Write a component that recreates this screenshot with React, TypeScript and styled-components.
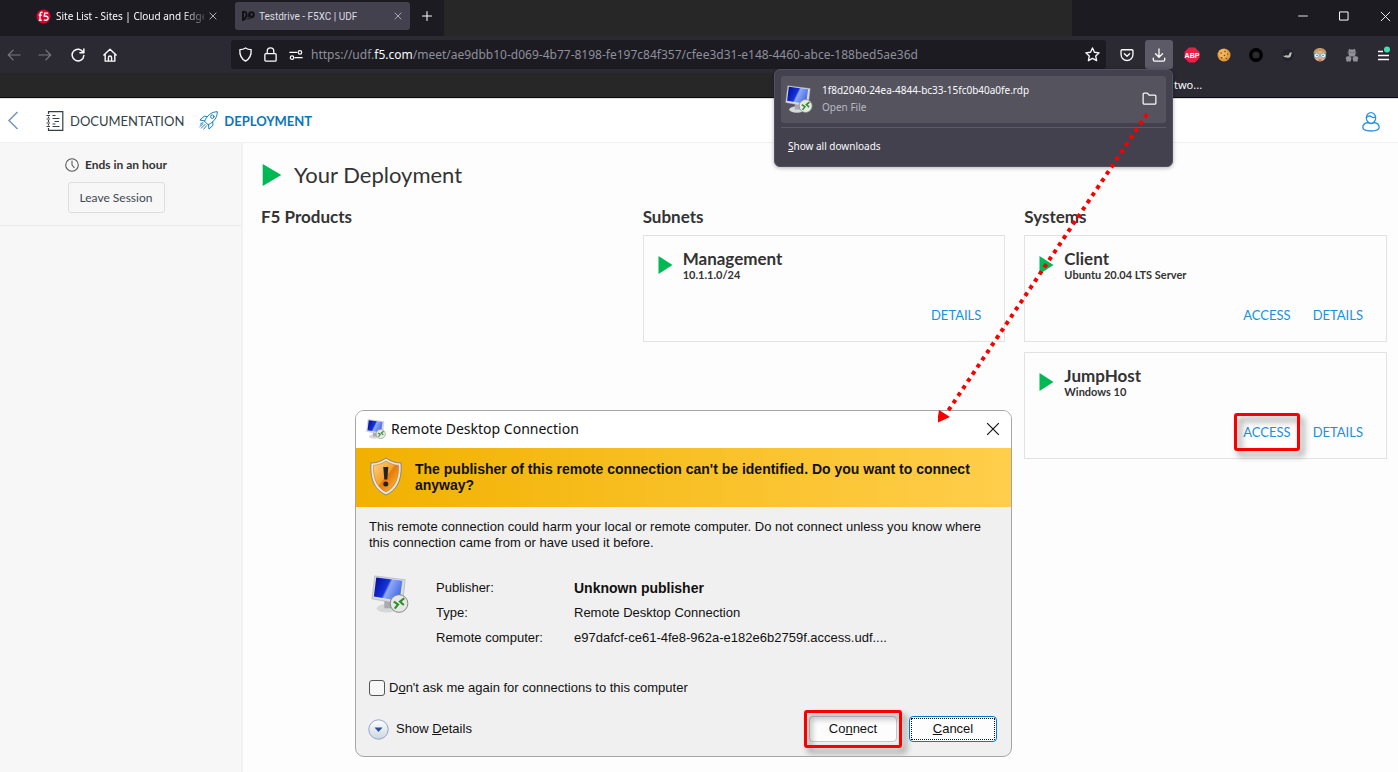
import React from 'react';
import styled, { createGlobalStyle } from 'styled-components';

const GlobalStyle = createGlobalStyle`
  *, *::before, *::after { box-sizing: border-box; }
  html, body, #root { height: 100%; }
  body { margin: 0; background: #fdfdfd; }
  button, input { font: inherit; color: inherit; }
  button { border: 0; padding: 0; background: none; cursor: pointer; }
  h1, h2, h3, p, dl, dd, dt { margin: 0; font-size: inherit; font-weight: inherit; }
  svg { display: block; flex: none; }
`;

const uiFont = '"Noto Sans", "Open Sans", sans-serif';
const siteFont = 'Lato, "Liberation Sans", sans-serif';
const dialogFont = '"Liberation Sans", Arial, sans-serif';

const Screen = styled.div`
  position: relative;
  display: flex;
  flex-direction: column;
  min-height: 100%;
  overflow: hidden;
  font-family: ${siteFont};
  color: #333;
`;

/* ---------- browser chrome ---------- */

const Chrome = styled.header`
  flex: none;
  font-family: ${uiFont};
  color: #fbfbfe;
  background: #2b2a33;
  border-bottom: 1px solid #0c0c0d;
`;

const TabStrip = styled.div`
  display: flex;
  height: 36px;
  background: #1c1b22;
`;

const Tabs = styled.div`
  display: flex;
  align-items: center;
  width: 444px;
  padding-left: 26px;
  padding-bottom: 4px;
`;

const Tab = styled.div<{ $active?: boolean }>`
  display: flex;
  align-items: center;
  gap: ${p => (p.$active ? 4 : 5)}px;
  width: ${p => (p.$active ? 175 : 205)}px;
  height: 28px;
  padding: ${p => (p.$active ? '0 8px 0 6px' : '0 14px 0 10px')};
  margin-right: 4px;
  border-radius: 3px;
  font-family: ${p => (p.$active ? 'Roboto, sans-serif' : uiFont)};
  font-size: 10px;
  color: ${p => (p.$active ? '#dcdce2' : '#fbfbfe')};
  background: ${p => (p.$active ? '#42414d' : 'transparent')};
`;

const TabTitle = styled.span<{ $fade?: boolean }>`
  flex: 1;
  min-width: 0;
  white-space: nowrap;
  ${p => p.$fade && 'mask-image: linear-gradient(to right, #000 84%, rgba(0, 0, 0, .2));'}
`;

const IconButton = styled.button<{ $w?: number }>`
  display: flex;
  align-items: center;
  justify-content: center;
  width: ${p => p.$w ?? 32}px;
  height: 28px;
  flex: none;
`;

const BlankStrip = styled.div`
  flex: 1;
  background: #272727;
`;

const WindowControls = styled.div`
  display: flex;
  align-items: center;
  justify-content: flex-end;
  gap: 15px;
  width: 326px;
  padding-bottom: 4px;
`;

const Toolbar = styled.div`
  display: flex;
  align-items: center;
  height: 37px;
`;

const NavButtons = styled.div`
  display: flex;
  width: 231px;
`;

const UrlBar = styled.div`
  display: flex;
  align-items: center;
  flex: 1;
  min-width: 0;
  height: 29px;
  padding-left: 2px;
  border-radius: 3px;
  background: #1c1b22;
`;

const UrlText = styled.div`
  flex: 1;
  min-width: 0;
  overflow: hidden;
  white-space: nowrap;
  padding-left: 3px;
  font-size: 12px;
  color: #8f8f9b;
  b { font-weight: 400; color: #fbfbfe; }
`;

const UrlIcon = styled.span`
  display: flex;
  justify-content: center;
  width: 25px;
`;

const Extensions = styled.div`
  display: flex;
  align-items: center;
  padding-left: 5px;
`;

const DownloadAnchor = styled.div`
  position: relative;
  display: flex;
  margin: 0 3px 0 2px;
`;

const DownloadButton = styled(IconButton)`
  width: 28px;
  height: 29px;
  border-radius: 3px;
  background: #5b5a66;
`;

const DownloadsPanel = styled.section`
  position: absolute;
  z-index: 2;
  top: 100%;
  right: 0;
  width: 399px;
  padding: 6px;
  border: 1px solid #52525e;
  border-radius: 6px;
  background: #42414d;
  box-shadow: 0 1px 4px rgba(0, 0, 0, .3);
  font-size: 10px;
`;

const DownloadItem = styled.div`
  display: flex;
  align-items: center;
  gap: 9px;
  height: 47px;
  padding: 0 9px 2px 4px;
  border-radius: 3px;
  background: #54535e;
`;

const DownloadInfo = styled.div`
  flex: 1;
  line-height: 17px;
  span { display: block; color: #b9b9c2; }
`;

const ShowAll = styled.button`
  display: block;
  width: 100%;
  height: 33px;
  margin-top: 4px;
  padding: 4px 7px 0;
  border-top: 1px solid #5b5a66;
  text-align: left;
`;

const BookmarkBar = styled.div`
  display: flex;
  height: 24px;
`;

const Bookmark = styled.a`
  width: 226px;
  padding: 4px 0 0 2px;
  font-size: 11px;
  line-height: 16px;
  color: #fbfbfe;
  text-decoration: none;
`;

/* ---------- site ---------- */

const SiteNav = styled.nav`
  display: flex;
  align-items: center;
  flex: none;
  height: 45px;
  padding: 0 18px 0 7px;
  background: #fff;
  border-top: 1px solid #dcdcdc;
  border-bottom: 1px solid #f1f1f1;
`;

const BackLink = styled.a`
  margin-right: 27px;
`;

const NavLink = styled.a<{ $active?: boolean }>`
  display: flex;
  align-items: center;
  gap: 6px;
  margin-right: 15px;
  font-size: 13px;
  font-weight: ${p => (p.$active ? 700 : 400)};
  color: ${p => (p.$active ? '#0a76bd' : '#333f48')};
  text-decoration: none;
`;

const AccountLink = styled.a`
  margin-left: auto;
  padding-top: 3px;
`;

const Body = styled.div`
  display: flex;
  flex: 1;
`;

const Sidebar = styled.aside`
  flex: none;
  width: 243px;
  background: #f7f7f7;
  border-right: 2px solid #f1f1f1;
`;

const Session = styled.div`
  display: flex;
  flex-direction: column;
  align-items: center;
  height: 83px;
  padding: 12px 9px 0 0;
  border-bottom: 1px solid #ebebeb;
`;

const TimeLeft = styled.div`
  display: flex;
  align-items: center;
  gap: 6px;
  font-size: 12px;
  font-weight: 700;
  line-height: 20px;
`;

const LeaveButton = styled.button`
  width: 97px;
  height: 31px;
  margin-top: 7px;
  border: 1px solid #dedede;
  border-radius: 3px;
  font-size: 12px;
  color: #3d4852;
`;

const Main = styled.main`
  flex: 1;
  min-width: 0;
  padding: 16px 11px 0 18px;
`;

const Title = styled.h1`
  display: flex;
  align-items: center;
  gap: 12px;
  padding-left: 1px;
  font-size: 22px;
  line-height: 32px;
`;

const Columns = styled.div`
  display: grid;
  grid-template-columns: repeat(3, minmax(0, 1fr));
  gap: 19px;
  margin-top: 14px;
`;

const Column = styled.section`
  display: flex;
  flex-direction: column;
  gap: 10px;
`;

const ColumnTitle = styled.h2`
  font-size: 17px;
  font-weight: 700;
  line-height: 24px;
  margin-bottom: -4px;
`;

const Card = styled.article`
  display: flex;
  flex-direction: column;
  justify-content: space-between;
  height: 107px;
  padding: 13px 23px 16px 14px;
  border: 1px solid #e2e2e2;
`;

const CardHead = styled.div`
  display: flex;
  align-items: center;
  gap: 10px;
  font-weight: 700;
  h3 { font-size: 17px; line-height: 20px; }
  p { font-size: 11px; line-height: 12px; }
`;

const CardActions = styled.div`
  display: flex;
  justify-content: flex-end;
  gap: 22px;
  font-size: 13px;
  line-height: 20px;
`;

const ActionLink = styled.a`
  position: relative;
  color: #1a90dc;
  text-decoration: none;
`;

const Highlight = styled.span<{ $x: number; $y: number }>`
  position: absolute;
  inset: ${p => -p.$y}px ${p => -p.$x}px;
  border: 3px solid #f80000;
  border-radius: 3px;
  filter: drop-shadow(4px 5px 3px rgba(0, 0, 0, .45));
  pointer-events: none;
`;

/* ---------- remote desktop dialog ---------- */

const Dialog = styled.section`
  position: absolute;
  top: 410px;
  left: 355px;
  width: 657px;
  border: 1px solid #a5a5a5;
  border-radius: 9px;
  overflow: hidden;
  background: #f0f0f0;
  font-family: ${dialogFont};
  font-size: 13px;
  line-height: 16px;
  color: #111;
`;

const DialogTitle = styled.header`
  display: flex;
  align-items: center;
  gap: 5px;
  height: 37px;
  padding: 0 2px 2px 10px;
  background: #fff;
  font-family: ${uiFont};
  font-size: 14px;
  h2 { flex: 1; }
`;

const Banner = styled.div`
  display: flex;
  gap: 12px;
  height: 59px;
  padding: 9px 14px 0 13px;
  background: linear-gradient(to right, #f2b100, #ffce4b);
  p {
    padding-top: 4px;
    font-size: 14px;
    font-weight: 700;
  }
`;

const Message = styled.p`
  padding: 12px 20px 0 13px;
`;

const Facts = styled.div`
  display: flex;
  gap: 27px;
  padding: 24px 15px 0;
`;

const FactList = styled.dl`
  display: grid;
  grid-template-columns: 138px 1fr;
  grid-auto-rows: 25px;
  align-items: center;
`;

const Strong = styled.dd`
  font-size: 14px;
  font-weight: 700;
`;

const Remember = styled.label`
  display: flex;
  align-items: center;
  gap: 4px;
  margin: 29px 0 0 13px;
  line-height: 18px;
`;

const Checkbox = styled.input`
  appearance: none;
  width: 16px;
  height: 16px;
  margin: 0;
  border: 1px solid #555;
  border-radius: 3px;
  background: #f7f7f7;
`;

const Footer = styled.footer`
  display: flex;
  align-items: center;
  gap: 12px;
  padding: 19px 14px 14px 12px;
`;

const DetailsToggle = styled.button`
  display: flex;
  align-items: center;
  gap: 7px;
  flex: 1;
`;

const DialogButton = styled.button<{ $focus?: boolean }>`
  position: relative;
  width: 88px;
  height: 26px;
  border: 1px solid ${p => (p.$focus ? '#0078d4' : '#c8c8c8')};
  border-radius: 4px;
  background: #fdfdfd;
  &::after {
    content: '';
    position: absolute;
    inset: 1px;
    border: 1px dotted ${p => (p.$focus ? '#111' : 'transparent')};
  }
`;

const Arrow = styled.svg`
  position: absolute;
  top: 106px;
  right: 240px;
  z-index: 3;
  pointer-events: none;
`;

/* ---------- icons ---------- */

const Play = ({ large }: { large?: boolean }) => (
  <svg width={large ? 20 : 15} height={large ? 22 : 18} viewBox="0 0 15 18" preserveAspectRatio="none" aria-hidden="true">
    <path d="M.5 0v18L14.5 9z" fill="#00b854" />
  </svg>
);

const Cross = ({ size, width = 1 }: { size: number; width?: number }) => (
  <svg width={size} height={size} viewBox="0 0 12 12" fill="none" stroke="currentColor" strokeWidth={width} aria-hidden="true">
    <path d="M1 1l10 10M11 1L1 11" />
  </svg>
);

const Line = ({ size = 16, children, color = 'currentColor', width = 1.4 }: { size?: number; children: React.ReactNode; color?: string; width?: number }) => (
  <svg width={size} height={size} viewBox="0 0 16 16" fill="none" stroke={color} strokeWidth={width} strokeLinecap="round" strokeLinejoin="round" aria-hidden="true">
    {children}
  </svg>
);

const RemoteIcon = ({ size, id }: { size: number; id: string }) => (
  <svg width={size} height={size} viewBox="0 0 40 40" aria-hidden="true">
    <defs>
      <linearGradient id={id} x1="0" y1="0.3" x2="1" y2="0.7">
        <stop offset="0" stopColor="#0510a8" />
        <stop offset=".42" stopColor="#1633dc" />
        <stop offset=".5" stopColor="#8fa9f5" />
        <stop offset="1" stopColor="#3a62e8" />
      </linearGradient>
    </defs>
    <ellipse cx="17" cy="35" rx="11" ry="4.5" fill="#d5d7d9" />
    <path d="M14 26l12 3-2 6h-10z" fill="#a9abae" />
    <path d="M4 1l32 4-3 26L1 25z" fill="#d9dbdd" stroke="#a5a8ac" strokeWidth=".6" />
    <path d="M5.500 2.500l27.500 3.500-3 21L3 22.500z" fill={`url(#${id})`} />
    <circle cx="29.500" cy="30" r="9.300" fill="#e6e8e6" stroke="#808380" strokeWidth="1" />
    <path d="M24 28l4.500 3-3.500 4.500M35 24.500l-4.500 3.500 4 3.500" fill="none" stroke="#2d8f28" strokeWidth="2.200" />
  </svg>
);

const F5Logo = () => (
  <svg width="15" height="15" viewBox="0 0 16 16" aria-hidden="true">
    <circle cx="8" cy="8" r="7.500" fill="#e4002b" />
    <path d="M7 3.700c-1.700-.6-2.700.3-2.700 1.800v6.300M2.800 6.500h3.400M2.900 12h3.200" fill="none" stroke="#fff" strokeWidth="1.500" />
    <path d="M13 4.400H9.300L8.800 7.500c3-.2 4.300.8 4.100 2.500-.2 1.700-2.400 2.500-4.600 1.500" fill="none" stroke="#fff" strokeWidth="1.500" />
  </svg>
);

const UdfLogo = () => (
  <svg width="14" height="12" viewBox="0 0 14 12" fill="none" stroke="#111116" strokeWidth="2" aria-hidden="true">
    <path d="M2 1v10M2 2c4-1 4 3 3 5s-3 3-3 3M7 7l2-3" />
    <circle cx="10.500" cy="4.500" r="2.300" />
    <path d="M6 9c2 0 4-1 7-2" strokeWidth="1" />
  </svg>
);

const BookIcon = () => (
  <svg width="18" height="20" viewBox="0 0 18 20" fill="none" stroke="#333f48" aria-hidden="true">
    <path d="M2.500 3V.7h14.300v18.600H2.500V17M2.500 5.500v1.500M2.500 9v2M2.500 13v1.500" strokeWidth="1.200" />
    <path d="M.5 4.500h3.500M.5 8h3.500M.5 12h3.500M.5 15.500h3.500M6.500 4.500h3M6.500 7.500h7M8.500 10.500h4.500M6.500 13h3M6.500 15.500h7" strokeWidth="1.100" />
  </svg>
);

const RocketIcon = () => (
  <svg width="19" height="19" viewBox="0 0 20 20" fill="none" stroke="#0a76bd" strokeWidth="1" strokeLinecap="round" strokeLinejoin="round" aria-hidden="true">
    <path d="M6 10.500C8 5 13 1 19.300.7c0 6-3.500 10.800-9.300 13.600z" />
    <path d="M8.500 6L5.500 5.500 1 9.500l5 1M14.500 11.500l.2 3.500-4.200 4-.5-4.700" />
    <circle cx="14" cy="6" r="1.800" />
    <path d="M4.500 13L.8 16.500M6.500 14L2.500 18M8 15.500l-3 3.500M3.500 12.300l-2 1.500" />
  </svg>
);

const UserIcon = () => (
  <svg width="18" height="20" viewBox="0 0 18 20" fill="none" stroke="#2d93e3" strokeWidth="1.300" strokeLinejoin="round" aria-hidden="true">
    <ellipse cx="9" cy="6" rx="4.700" ry="5.300" />
    <path d="M4.500 5.500c2-2 4-1.500 5-.7s3 .8 4 .2M6 10.500C3 11 .8 12.800.8 15.300c0 2.500 4 3.700 8.200 3.700s8.200-1.200 8.200-3.700c0-2.500-2.200-4.300-5.200-4.800-1.800 1.300-4.200 1.300-6 0z" />
  </svg>
);

const ShieldWarning = () => (
  <svg width="34" height="40" viewBox="0 0 34 40" aria-hidden="true">
    <defs>
      <linearGradient id="shield" x1="0" y1="0" x2="1" y2="1">
        <stop offset="0" stopColor="#ffd68a" />
        <stop offset=".48" stopColor="#f6a02c" />
        <stop offset=".52" stopColor="#e67a08" />
        <stop offset="1" stopColor="#ffc047" />
      </linearGradient>
    </defs>
    <path d="M17 1c4 3 9 5 15 5 1 14-2 26-15 32C4 32 1 20 2 6c6 0 11-2 15-5z" fill="#e9e7df" stroke="#8a8578" />
    <path d="M17 4c4 2.500 8 4 12.500 4.400C30 20 27 30 17 35 7 30 4 20 4.500 8.400 9 8 13 6.500 17 4z" fill="url(#shield)" stroke="#c97a14" strokeWidth=".6" />
    <path d="M14.300 10h5l-1 12.500h-3z" fill="#222" />
    <circle cx="16.800" cy="27" r="2.500" fill="#222" />
  </svg>
);

const AbpIcon = () => (
  <svg width="16" height="16" viewBox="0 0 16 16" aria-hidden="true">
    <path d="M5 .5h6L15.500 5v6L11 15.500H5L.5 11V5z" fill="#ed1e45" />
    <text x="8" y="10.500" textAnchor="middle" fontFamily="Liberation Sans, sans-serif" fontWeight="700" fontSize="7" fill="#fff">ABP</text>
  </svg>
);

const CookieIcon = () => (
  <svg width="14" height="14" viewBox="0 0 14 14" aria-hidden="true">
    <circle cx="7" cy="7" r="6.500" fill="#e19a3c" />
    <circle cx="6" cy="5.500" r="4.500" fill="#f0b45c" />
    <g fill="#7d4313">
      <circle cx="4" cy="5" r=".8" /><circle cx="8" cy="3.500" r=".8" /><circle cx="7.500" cy="7.500" r=".8" />
      <circle cx="4.500" cy="9.800" r=".8" /><circle cx="10.500" cy="6" r=".7" /><circle cx="9.500" cy="10.500" r=".8" />
    </g>
  </svg>
);

const BirdIcon = () => (
  <svg width="14" height="14" viewBox="0 0 14 14" aria-hidden="true">
    <circle cx="7" cy="7" r="6" fill="#22232a" />
    <path d="M1.500 7.500l2 .5 1-.8 3 .3 1-2.500 1.300-.8 1.700.8-1.300.7c.3 2.500-1 4-3.200 4-2 0-4-.5-5.500-2.200z" fill="#b8beb8" />
  </svg>
);

const FaceIcon = () => (
  <svg width="16" height="16" viewBox="0 0 16 16" aria-hidden="true">
    <circle cx="8" cy="8.500" r="6" fill="#e7b08c" />
    <path d="M1.500 7C1.500 3 4.500 1 8 1s6.500 2 6.500 6c-2-2-4-3-6.500-3S3.500 5 1.500 7z" fill="#c29a62" />
    <circle cx="4.800" cy="8.500" r="2.500" fill="#eef6f8" stroke="#6fa9b5" />
    <circle cx="11.200" cy="8.500" r="2.500" fill="#eef6f8" stroke="#6fa9b5" />
    <circle cx="5" cy="8.500" r=".7" fill="#355" /><circle cx="11" cy="8.500" r=".7" fill="#355" />
    <path d="M6.500 13h3" stroke="#a43" />
  </svg>
);

const AgentIcon = () => (
  <svg width="14" height="14" viewBox="0 0 14 14" fill="#909096" aria-hidden="true">
    <path d="M4 .8l1.500.8h3L10 .8l.7 3.200 1.300.8H2L3.300 4zM3.500 5h7v2L9 8.500H5L3.500 7zM1.500 8.500L5 8l1.500 2.500L5.500 13.500H1.300V11h-.8zM12.500 8.500L9 8l-1.500 2.500 1 3h4.200V11h.8z" />
  </svg>
);

/* ---------- composed parts ---------- */

type ResourceProps = { name: string; detail: string; access?: boolean; marked?: boolean };

const ResourceCard = ({ name, detail, access, marked }: ResourceProps) => (
  <Card>
    <CardHead>
      <Play />
      <div>
        <h3>{name}</h3>
        <p>{detail}</p>
      </div>
    </CardHead>
    <CardActions>
      {access && (
        <ActionLink href="#access">
          ACCESS
          {marked && <Highlight $x={9} $y={9} />}
        </ActionLink>
      )}
      <ActionLink href="#details">DETAILS</ActionLink>
    </CardActions>
  </Card>
);

export default function App() {
  return (
    <Screen>
      <GlobalStyle />
      <Chrome>
        <TabStrip>
          <Tabs>
            <Tab>
              <F5Logo />
              <TabTitle $fade>Site List - Sites | Cloud and Edge</TabTitle>
              <button aria-label="Close Site List tab"><Cross size={8} /></button>
            </Tab>
            <Tab $active>
              <UdfLogo />
              <TabTitle>Testdrive - F5XC | UDF</TabTitle>
              <button aria-label="Close Testdrive tab"><Cross size={8} /></button>
            </Tab>
            <IconButton $w={26} aria-label="New tab">
              <Line size={12}><path d="M8 2v12M2 8h12" /></Line>
            </IconButton>
          </Tabs>
          <BlankStrip />
          <WindowControls>
            <IconButton $w={26} aria-label="Minimize"><Line size={10}><path d="M1 8h14" /></Line></IconButton>
            <IconButton $w={26} aria-label="Maximize"><Line size={10} width={1.600}><path d="M1.500 1.500h13v13h-13z" /></Line></IconButton>
            <IconButton $w={26} aria-label="Close window"><Cross size={11} /></IconButton>
          </WindowControls>
        </TabStrip>
        <Toolbar>
          <NavButtons>
            <IconButton $w={28} aria-label="Back"><Line color="#77767f" size={14}><path d="M15 8H1.500M7 2.500L1.500 8 7 13.500" /></Line></IconButton>
            <IconButton $w={34} aria-label="Forward"><Line color="#77767f" size={14}><path d="M1 8h13.500M9 2.500L14.500 8 9 13.500" /></Line></IconButton>
            <IconButton aria-label="Reload"><Line size={14} width={1.700}><path d="M14 5A6.700 6.700 0 1 0 14.700 8.500M14.700 1v4.500h-4.500" /></Line></IconButton>
            <IconButton aria-label="Home"><Line size={14} width={1.600}><path d="M1 8l7-6.700L15 8M2.500 7v8h11V7M6.200 15v-4a1.800 1.800 0 0 1 3.600 0v4" /></Line></IconButton>
          </NavButtons>
          <UrlBar>
            <UrlIcon><Line size={15}><path d="M8 1c2 1.300 4 1.800 6 1.900.4 5-1.500 9.600-6 12.100C3.500 12.500 1.600 7.900 2 2.900 4 2.800 6 2.300 8 1z" /></Line></UrlIcon>
            <UrlIcon><Line size={15}><path d="M3 7h10a1 1 0 0 1 1 1v6a1 1 0 0 1-1 1H3a1 1 0 0 1-1-1V8a1 1 0 0 1 1-1zM4.500 7V4.500a3.500 3.500 0 0 1 7 0V7" /></Line></UrlIcon>
            <UrlIcon><Line size={14}><path d="M1 5h8M7 11h8" /><circle cx="12.500" cy="5" r="2" /><circle cx="3.500" cy="11" r="2" /></Line></UrlIcon>
            <UrlText>https://udf.<b>f5.com</b>/meet/ae9dbb10-d069-4b77-8198-fe197c84f357/cfee3d31-e148-4460-abce-188bed5ae36d</UrlText>
            <IconButton $w={28} aria-label="Bookmark this page"><Line size={15}><path d="M8 1l2.100 4.600 5 .6-3.700 3.400 1 5L8 12.100l-4.400 2.500 1-5L.9 6.200l5-.6z" /></Line></IconButton>
          </UrlBar>
          <Extensions>
            <IconButton aria-label="Save to Pocket"><Line size={14} width={1.500}><path d="M2.500 2h11a1.300 1.300 0 0 1 1.300 1.300V7.500a6.800 6.800 0 0 1-13.600 0V3.300A1.300 1.300 0 0 1 2.500 2zM5 6.500l3 3 3-3" /></Line></IconButton>
            <DownloadAnchor>
              <DownloadButton aria-label="Downloads">
                <Line size={14} width={1.500}><path d="M8 1v9.500M4 6.500l4 4 4-4M1.500 11.500v2a1.500 1.500 0 0 0 1.500 1.500h10a1.500 1.500 0 0 0 1.500-1.500v-2" /></Line>
              </DownloadButton>
              <DownloadsPanel>
                <DownloadItem>
                  <RemoteIcon size={28} id="rdp-download" />
                  <DownloadInfo>
                    1f8d2040-24ea-4844-bc33-15fc0b40a0fe.rdp
                    <span>Open File</span>
                  </DownloadInfo>
                  <button aria-label="Show in folder">
                    <Line size={15} width={1.300}><path d="M1.200 3.500a1.200 1.200 0 0 1 1.200-1.200h3.300l1.800 2h6.100a1.200 1.200 0 0 1 1.200 1.200v7.200a1.200 1.200 0 0 1-1.200 1.200H2.400a1.200 1.200 0 0 1-1.200-1.200z" /></Line>
                  </button>
                </DownloadItem>
                <ShowAll><u>S</u>how all downloads</ShowAll>
              </DownloadsPanel>
            </DownloadAnchor>
            <IconButton aria-label="Adblock Plus"><AbpIcon /></IconButton>
            <IconButton aria-label="Cookies"><CookieIcon /></IconButton>
            <IconButton aria-label="Ring">
              <svg width="14" height="14" viewBox="0 0 14 14"><circle cx="7" cy="7" r="5.200" fill="none" stroke="#000" strokeWidth="3.400" /></svg>
            </IconButton>
            <IconButton aria-label="Bird"><BirdIcon /></IconButton>
            <IconButton aria-label="Profile"><FaceIcon /></IconButton>
            <IconButton aria-label="Agent"><AgentIcon /></IconButton>
            <IconButton $w={30} aria-label="Menu">
              <svg width="14" height="18" viewBox="0 0 14 18"><path d="M2 5.500h5M2 9.500h11M2 13.500h11" stroke="#fbfbfe" strokeWidth="1.300" /><circle cx="11" cy="3.500" r="3" fill="#3fe1b0" /></svg>
            </IconButton>
          </Extensions>
        </Toolbar>
        <BookmarkBar>
          <BlankStrip />
          <Bookmark href="#bookmark">two...</Bookmark>
        </BookmarkBar>
      </Chrome>

      <SiteNav>
        <BackLink href="#back" aria-label="Back to list">
          <svg width="12" height="19" viewBox="0 0 12 19" fill="none" stroke="#7b9bb0" strokeWidth="1.600"><path d="M10.500 1L2 9.500l8.500 8.500" /></svg>
        </BackLink>
        <NavLink href="#documentation"><BookIcon />DOCUMENTATION</NavLink>
        <NavLink href="#deployment" $active><RocketIcon />DEPLOYMENT</NavLink>
        <AccountLink href="#account" aria-label="Account"><UserIcon /></AccountLink>
      </SiteNav>

      <Body>
        <Sidebar>
          <Session>
            <TimeLeft>
              <Line size={14} width={1.200} color="#555"><circle cx="8" cy="8" r="7.200" /><path d="M8 3.500V8l2.500 3" /></Line>
              Ends in an hour
            </TimeLeft>
            <LeaveButton>Leave Session</LeaveButton>
          </Session>
        </Sidebar>
        <Main>
          <Title><Play large />Your Deployment</Title>
          <Columns>
            <Column>
              <ColumnTitle>F5 Products</ColumnTitle>
            </Column>
            <Column>
              <ColumnTitle>Subnets</ColumnTitle>
              <ResourceCard name="Management" detail="10.1.1.0/24" />
            </Column>
            <Column>
              <ColumnTitle>Systems</ColumnTitle>
              <ResourceCard name="Client" detail="Ubuntu 20.04 LTS Server" access />
              <ResourceCard name="JumpHost" detail="Windows 10" access marked />
            </Column>
          </Columns>
        </Main>
      </Body>

      <Dialog role="dialog" aria-labelledby="rdc-title">
        <DialogTitle>
          <RemoteIcon size={20} id="rdp-title" />
          <h2 id="rdc-title">Remote Desktop Connection</h2>
          <IconButton aria-label="Close dialog"><Cross size={14} /></IconButton>
        </DialogTitle>
        <Banner>
          <ShieldWarning />
          <p>The publisher of this remote connection can't be identified. Do you want to connect anyway?</p>
        </Banner>
        <Message>
          This remote connection could harm your local or remote computer. Do not connect unless you know where this connection came from or have used it before.
        </Message>
        <Facts>
          <RemoteIcon size={38} id="rdp-body" />
          <FactList>
            <dt>Publisher:</dt><Strong>Unknown publisher</Strong>
            <dt>Type:</dt><dd>Remote Desktop Connection</dd>
            <dt>Remote computer:</dt><dd>e97dafcf-ce61-4fe8-962a-e182e6b2759f.access.udf....</dd>
          </FactList>
        </Facts>
        <Remember>
          <Checkbox type="checkbox" />
          <span>D<u>o</u>n't ask me again for connections to this computer</span>
        </Remember>
        <Footer>
          <DetailsToggle>
            <svg width="21" height="21" viewBox="0 0 21 21" aria-hidden="true">
              <defs>
                <linearGradient id="toggle" x1="0" y1="0" x2="0" y2="1"><stop offset="0" stopColor="#fff" /><stop offset="1" stopColor="#cdd6e0" /></linearGradient>
              </defs>
              <circle cx="10.500" cy="10.500" r="9.700" fill="url(#toggle)" stroke="#94a3cf" />
              <path d="M6.500 8.500h8l-4 4.500z" fill="#2a4f9e" />
            </svg>
            <span>Show <u>D</u>etails</span>
          </DetailsToggle>
          <DialogButton>Co<u>n</u>nect<Highlight $x={6} $y={7} /></DialogButton>
          <DialogButton $focus><u>C</u>ancel</DialogButton>
        </Footer>
      </Dialog>

      <Arrow width="220" height="320" viewBox="0 0 220 320" aria-hidden="true">
        <path d="M209 8L8 308" fill="none" stroke="#f80000" strokeWidth="4" strokeDasharray="4 4.600" />
        <path d="M-1 317l2-13 11 7z" fill="#f80000" />
      </Arrow>
    </Screen>
  );
}
